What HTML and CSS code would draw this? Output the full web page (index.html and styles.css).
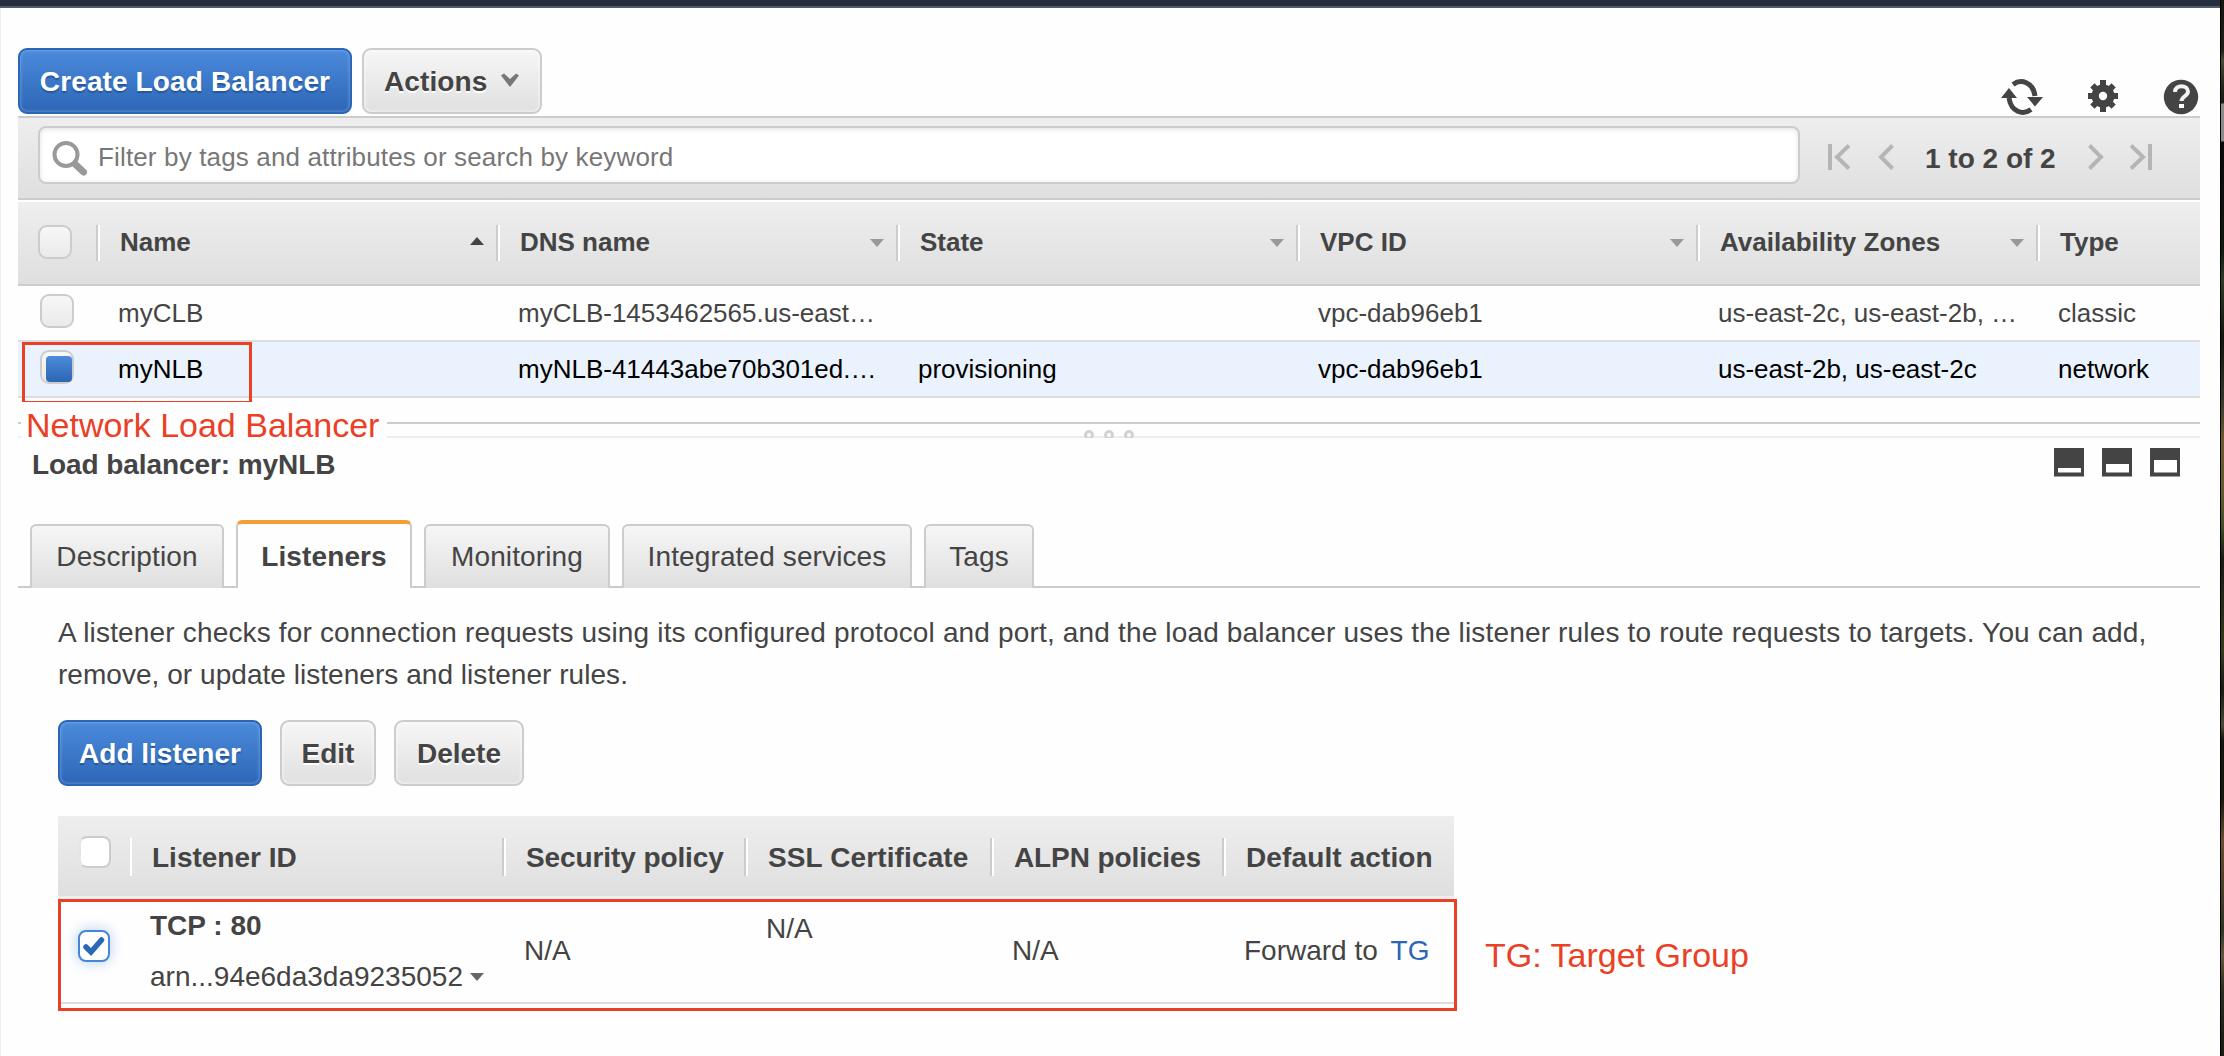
FILE: index.html
```html
<!DOCTYPE html>
<html lang="en">
<head>
<meta charset="utf-8">
<title>Load Balancers</title>
<link rel="stylesheet" href="styles.css">
</head>
<body>
<div class="window">
  <header class="navbar"></header>
  <main class="console">
    <div class="actions">
      <button class="btn primary create">Create Load Balancer</button>
      <button class="btn menu">Actions
        <svg width="20" height="14" viewBox="0 0 20 14"><path d="M1 2.5 4 0.5 10 6 16 0.5 19 2.5 10 14Z" fill="#777"/></svg>
      </button>
      <div class="tools">
        <svg class="refresh" width="44" height="38" viewBox="0 0 44 38"><g fill="none" stroke="#444" stroke-width="5"><path d="M13 6.5C21 .5 33 4 35 18"/><path d="M31 31.500C23 37.500 11 34 9 20"/></g><path d="M27 19h16l-8 9.500zM1 20h16l-8-10z" fill="#444"/></svg>
        <svg class="gear" width="32" height="34" viewBox="0 0 32 34"><g fill="#444"><circle cx="16" cy="17" r="11.500"/><path d="M13 1h6v32h-6zM1 14h30v6H1z"/><path d="M13 2h6v30h-6z" transform="rotate(45 16 17)"/><path d="M13 2h6v30h-6z" transform="rotate(-45 16 17)"/></g><circle cx="16" cy="17" r="4.200" fill="#fff"/></svg>
        <svg class="help" width="36" height="36" viewBox="0 0 36 36"><circle cx="18" cy="18" r="17.200" fill="#444"/><path d="M12 13c0-8 13-7.500 13-.5 0 4.500-6.500 5-6.500 9.500" fill="none" stroke="#f2f2f2" stroke-width="4"/><path d="M16 25h5v4h-5z" fill="#fff"/></svg>
      </div>
    </div>

    <div class="filterbar">
      <div class="search">
        <svg width="38" height="36" viewBox="0 0 38 36"><circle cx="14" cy="14.500" r="11.500" fill="none" stroke="#999" stroke-width="4"/><path d="M23 24l8.500 8" stroke="#999" stroke-width="7" stroke-linecap="round"/></svg>
        <span>Filter by tags and attributes or search by keyword</span>
      </div>
      <div class="pager">
        <svg width="22" height="26" viewBox="0 0 22 26"><path d="M2 0v26M21 1.500 9 13l12 11.500" /></svg>
        <svg class="prev" width="16" height="26" viewBox="0 0 16 26"><path d="M14.500 1.500 3 13l11.500 11.500"/></svg>
        <b>1 to 2 of 2</b>
        <svg class="next" width="16" height="26" viewBox="0 0 16 26"><path d="M1.500 1.500 13 13 1.500 24.500"/></svg>
        <svg width="22" height="26" viewBox="0 0 22 26"><path d="M20 0v26M1 1.500 13 13 1 24.500"/></svg>
      </div>
    </div>

    <div class="grid">
      <div class="row head">
        <div class="pick"><i class="box"></i></div>
        <div class="th"><span>Name</span><i class="up"></i></div>
        <div class="th"><span>DNS name</span><i class="down"></i></div>
        <div class="th"><span>State</span><i class="down"></i></div>
        <div class="th"><span>VPC ID</span><i class="down"></i></div>
        <div class="th"><span>Availability Zones</span><i class="down"></i></div>
        <div class="th"><span>Type</span></div>
      </div>
      <div class="row">
        <div class="pick"><i class="box"></i></div>
        <div>myCLB</div><div>myCLB-1453462565.us-east…</div><div></div><div>vpc-dab96eb1</div><div>us-east-2c, us-east-2b, …</div><div>classic</div>
      </div>
      <div class="row selected">
        <div class="pick"><i class="box on"></i></div>
        <div>myNLB</div><div>myNLB-41443abe70b301ed.…</div><div>provisioning</div><div>vpc-dab96eb1</div><div>us-east-2b, us-east-2c</div><div>network</div>
        <span class="mark mark-nlb"></span>
      </div>
    </div>

    <div class="splitter">
      <svg width="50" height="8" viewBox="0 0 50 8"><g fill="#fefefe" stroke="#d2d2d2" stroke-width="3"><circle cx="5" cy="5" r="3.500"/><circle cx="25" cy="5" r="3.500"/><circle cx="45" cy="5" r="3.500"/></g></svg>
      <span class="note note-nlb">Network Load Balancer</span>
    </div>

    <div class="detail-head">
      <b>Load balancer: myNLB</b>
      <div class="panes">
        <svg width="30" height="29" viewBox="0 0 30 29"><path d="M0 0h30v28.500H0z" fill="#444"/><path d="M4 20h23v4.500H4z" fill="#fff"/></svg>
        <svg width="30" height="29" viewBox="0 0 30 29"><path d="M0 0h30v28.500H0z" fill="#444"/><path d="M4 16h23v8.500H4z" fill="#fff"/></svg>
        <svg width="30" height="29" viewBox="0 0 30 29"><path d="M0 0h30v28.500H0z" fill="#444"/><path d="M4 12h23v12.500H4z" fill="#fff"/></svg>
      </div>
    </div>

    <nav class="tabs">
      <a class="tab t1">Description</a>
      <a class="tab t2 active">Listeners</a>
      <a class="tab t3">Monitoring</a>
      <a class="tab t4">Integrated services</a>
      <a class="tab t5">Tags</a>
    </nav>

    <section class="panel">
      <p><span class="lead">A listener checks for connection requests using its configured protocol and port, and the load balancer uses the listener rules to route requests to targets. You can add,</span><br>remove, or update listeners and listener rules.</p>
      <div class="buttons">
        <button class="btn primary add">Add listener</button>
        <button class="btn edit">Edit</button>
        <button class="btn delete">Delete</button>
      </div>
      <div class="listing">
        <div class="listeners">
          <div class="lrow lhead">
            <div><i class="check"></i></div>
            <div class="lh first">Listener ID</div>
            <div class="lh tight">Security policy</div>
            <div class="lh wide">SSL Certificate</div>
            <div class="lh tight">ALPN policies</div>
            <div class="lh wide">Default action</div>
          </div>
          <div class="lrow lbody">
            <div><i class="check ticked"><svg width="24" height="22" viewBox="0 0 24 22"><path d="M4 12l5 5L19.500 5" fill="none" stroke="#2b66b7" stroke-width="5.500" stroke-linecap="round"/></svg></i></div>
            <div class="ident"><b>TCP : 80</b><span>arn...94e6da3da9235052<i class="down dark"></i></span></div>
            <div>N/A</div>
            <div class="high">N/A</div>
            <div>N/A</div>
            <div>Forward to <a>TG</a></div>
            <span class="mark mark-row"></span>
          </div>
        </div>
        <span class="note note-tg">TG: Target Group</span>
      </div>
    </section>
  </main>
</div>
<div class="wallpaper"></div>
</body>
</html>
```

FILE: styles.css
```css
* { box-sizing: border-box; }
body {
  margin: 0;
  width: 2224px;
  height: 1056px;
  overflow: hidden;
  display: flex;
  background: #000;
  color: #444;
  font: 28px "Liberation Sans", Arial, sans-serif;
}
svg { display: block; flex: none; }
.window { width: 2220px; height: 1056px; background: #fefefe; box-shadow: inset 1px 0 #eee; }
.navbar { height: 8px; background: #262f3e; border-bottom: 2px solid #545b68; }
.wallpaper {
  width: 3px;
  margin-left: 1px;
  background: linear-gradient(#15150f 0, #20211a 50px, #4b4c35 60px, #25271d 85px, #191b12 103px, #8b8b89 104px, #8b8b89 141px, #080c08 142px, #11180f 250px, #303b25 280px, #11150d 340px, #37382b 400px, #6c5b2c 440px, #65592c 490px, #42502b 525px, #171b14 560px, #39391d 650px, #171c13 690px, #4d4935 725px, #11150f 740px, #19180f 800px, #6b4c32 840px, #4c3e2a 890px, #2d3522 930px, #6a553c 955px, #2d2d22 990px, #161b12 1056px);
}
.console { width: 2182px; margin-left: 18px; }

.btn {
  height: 66px;
  padding: 2px 0 0;
  border: 2px solid #ccc;
  border-radius: 9px;
  background: linear-gradient(#f6f6f6, #e0e0e0);
  box-shadow: inset 0 0 3px 1px rgba(255, 255, 255, .6);
  color: #444;
  font: bold 28px/60px "Liberation Sans", Arial, sans-serif;
  text-shadow: 0 2px 0 #fff;
  white-space: nowrap;
}
.primary {
  border-color: #2b66b7;
  background: linear-gradient(#4b8adb, #2e66b6);
  box-shadow: inset 0 0 3px 1px rgba(160, 200, 240, .4);
  color: #fff;
  text-shadow: 0 2px 1px #26579b;
}
.actions { height: 108px; padding-top: 40px; display: flex; gap: 10px; }
.create { width: 334px; letter-spacing: .12px; }
.menu { width: 180px; display: flex; align-items: center; padding-left: 20px; gap: 13px; letter-spacing: .1px; }
.menu svg { margin-top: -5px; }
.tools { margin-left: auto; display: flex; align-items: center; padding: 29px 1px 0 0; height: 68px; }
.gear { margin-left: 43px; margin-top: -2px; }
.help { margin-left: 44px; }

.filterbar {
  height: 84px;
  border: 2px solid #ccc;
  border-width: 2px 0;
  padding: 8px 0 0 20px;
  background: linear-gradient(#eee, #dfdfdf);
  display: flex;
}
.search {
  flex: none;
  width: 1762px;
  height: 58px;
  border: 2px solid #ccc;
  border-radius: 8px;
  background: #fff;
  box-shadow: inset 0 1px 5px rgba(0, 0, 0, .12);
  display: flex;
  align-items: center;
  padding-left: 12px;
  color: #777;
  font-size: 26px;
  letter-spacing: .15px;
}
.search svg { margin: 6px 8px 0 0; }
.search span { padding-top: 5px; }
.pager { display: flex; align-items: center; height: 62px; padding-left: 28px; }
.pager svg { fill: none; stroke: #b5b5b5; stroke-width: 4; }
.pager b { width: 131px; padding-top: 4px; white-space: nowrap; }
.prev { margin: 0 31px 0 28px; }
.next { margin: 0 26px 0 32px; }

.grid { padding-top: 2px; font-size: 26px; }
.row {
  position: relative;
  height: 56px;
  display: grid;
  grid-template-columns: 78px 400px 400px 400px 400px 340px 164px;
  align-items: center;
  border-bottom: 2px solid #ddd;
  white-space: nowrap;
}
.row > div { padding: 0 0 0 22px; height: 34px; line-height: 34px; }
.head { height: 84px; background: linear-gradient(#eee, #dfdfdf); border-bottom-color: #ccc; font-weight: bold; }
.head > .th {
  height: 36px;
  padding: 0 12px 0 22px;
  border-left: 2px solid #ccc;
  box-shadow: inset 2px 0 #fff;
  display: flex;
  align-items: center;
  justify-content: space-between;
}
.th span { margin-top: -3px; }
.row > .pick { padding: 0 0 0 22px; margin-top: -4px; }
.head > .pick { padding-left: 20px; margin-top: -3px; }
.selected { background: #eaf2fd; color: #000; }
.box {
  display: block;
  width: 34px;
  height: 34px;
  border: 2px solid #ccc;
  border-radius: 9px;
  background: linear-gradient(#f7f7f7, #eaeaea);
}
.on { padding: 4px 0 0 4px; }
.on::before { content: ""; display: block; width: 26px; height: 26px; border-radius: 4px; background: linear-gradient(#4c8bdb, #2c65b3); }
.up, .down { width: 14px; height: 8px; background: #999; clip-path: polygon(0 0, 100% 0, 50% 100%); margin-top: 0; }
.up { background: #444; clip-path: polygon(0 100%, 100% 100%, 50% 0); margin-top: -4px; }
.mark { position: absolute; border: 3px solid #ea4025; }
.mark-nlb { left: 4px; top: 0; width: 230px; height: 60px; border-bottom-width: 1px; z-index: 1; }

.splitter { position: relative; margin-top: 24px; height: 16px; border: 2px solid #ccc; border-bottom-color: #eee; border-width: 2px 0; }
.splitter svg { margin: 6px 0 0 1066px; }
.note { color: #ea4025; font-size: 34px; white-space: nowrap; }
.note-nlb { position: absolute; left: 3px; top: -20px; width: 366px; height: 38px; padding-left: 5px; line-height: 42px; background: #fefefe; }
.detail-head { height: 82px; padding: 10px 20px 0 14px; display: flex; justify-content: space-between; line-height: 34px; }
.detail-head b { letter-spacing: -.08px; }
.panes { display: flex; gap: 18px; }

.tabs { height: 68px; display: flex; gap: 12px; align-items: flex-end; padding-left: 12px; box-shadow: inset 0 -2px #ccc; }
.tab {
  height: 64px;
  border: 2px solid #ccc;
  border-bottom: 0;
  border-radius: 6px 6px 0 0;
  background: linear-gradient(#f6f6f6, #dfdfdf);
  line-height: 62px;
  text-align: center;
  white-space: nowrap;
  letter-spacing: .12px;
}
.active { height: 68px; border-top: 4px solid #f19d38; background: #fefefe; font-weight: bold; line-height: 65px; }
.t1 { width: 194px; }
.t2 { width: 176px; }
.t3 { width: 186px; }
.t4 { width: 290px; }
.t5 { width: 110px; }

.panel { padding: 24px 0 0 40px; }
.panel p { margin: 0; line-height: 42px; white-space: nowrap; letter-spacing: .04px; }
.lead { letter-spacing: .163px; }
.buttons { display: flex; gap: 18px; margin-top: 24px; }
.add { width: 204px; }
.edit { width: 96px; }
.delete { width: 130px; }
.listing { display: flex; margin-top: 30px; }
.listeners { width: 1396px; }
.lrow { display: grid; grid-template-columns: 70px 374px 242px 246px 232px 232px; white-space: nowrap; }
.lhead { height: 83px; padding-top: 22px; background: linear-gradient(#eee, #dfdfdf 80px, #eee 80px); font-weight: bold; }
.lh { height: 38px; padding: 0 0 0 22px; line-height: 40px; border-left: 2px solid #ccc; box-shadow: inset 2px 0 #fff; }
.tight { letter-spacing: -.1px; }
.wide { letter-spacing: .12px; }
.first { border-left-color: transparent; }
.check { display: block; width: 32px; height: 32px; margin: -2px 0 0 21px; border: 2px solid #ccc; border-left-color: #e5e5e5; border-radius: 8px; background: #fff; }
.ticked { margin: 22px 0 0 20px; border-color: #4586d8; padding: 3px 2px; box-shadow: 0 0 14px #b3cdf2; }
.lbody { position: relative; height: 105px; padding-top: 9px; border-bottom: 2px solid #ddd; }
.lbody > div { line-height: 40px; padding: 23px 0 0 22px; }
.lbody > div:first-child { padding: 0; }
.lbody > .high { padding-top: 1px; }
.lbody > .ident { padding: 0 0 0 22px; display: flex; flex-direction: column; gap: 11px; margin-top: -2px; }
.ident span { display: flex; align-items: center; gap: 7px; }
.dark { background: #666; }
.lbody a { color: #2b66b7; margin-left: 5px; }
.mark-row { left: 0; top: 0; width: 1399px; height: 112px; }
.note-tg { margin: 119px 0 0 31px; line-height: 40px; }
```
